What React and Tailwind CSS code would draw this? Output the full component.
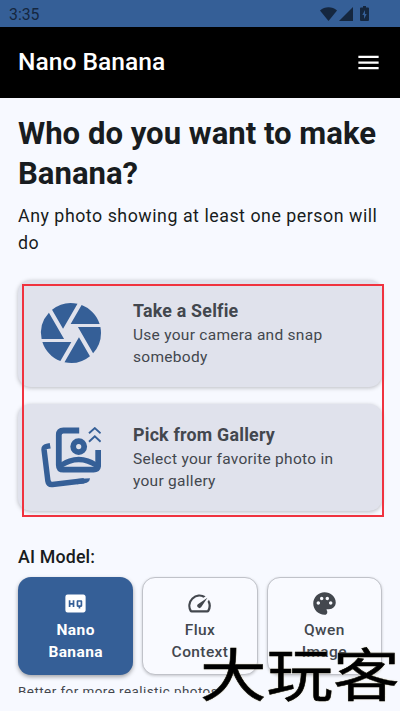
import { MdCamera, MdHighQuality, MdMenu, MdPalette, MdSpeed } from 'react-icons/md';

const GalleryIcon = () => (
    <svg className="mt-[1px]" width="60" height="61" viewBox="0 0 60 61" fill="none" stroke="currentColor">
        <path d="M38.2 3.500H22.400q-4.600 0-4.600 4.600v29.800q0 4.700 4.600 4.700h30.200q4.600 0 4.600-4.700V23" strokeWidth="5.800" />
        <circle cx="37.700" cy="19.600" r="5.500" strokeWidth="5.800" />
        <path d="M19.500 38.600Q37.700 26.400 56 38.600" strokeWidth="5.200" />
        <path d="M9.200 18.800l-3.400.6q-3 .6-2.700 3.600l3.800 31q.6 3.800 4.600 3.400L43 53.800" strokeWidth="5.500" />
        <path d="M36 52l13-.8q-.6 4.400-5.400 5.100L36 57.200z" fill="currentColor" stroke="none" />
        <path d="M48 6.300l5.800-5.200 5.800 5.200M48 14.800l5.800-5.400 5.800 5.400" strokeWidth="1.900" />
    </svg>
);

const options = [
    {
        title: 'Take a Selfie',
        desc: 'Use your camera and snap somebody',
        icon: <MdCamera className="size-[72px] shrink-0" />,
    },
    {
        title: 'Pick from Gallery',
        desc: 'Select your favorite photo in your gallery',
        icon: <GalleryIcon />,
    },
];

const models = [
    { first: 'Nano', second: 'Banana', icon: MdHighQuality, active: true },
    { first: 'Flux', second: 'Context', icon: MdSpeed },
    { first: 'Qwen', second: 'Image', icon: MdPalette },
];

const StatusBar = () => (
    <div className="flex h-[27px] items-center justify-between bg-[#355f97] pl-[9px] pr-[31px] text-[#15273f]">
        <span className="pt-[2px] text-[15.8px] leading-none">3:35</span>
        <div className="flex items-end pb-[1px]">
            <svg width="17" height="14" viewBox="0 0 17 14" fill="currentColor">
                <path d="M8.5 14L0 3.6Q3.7.3 8.5.3T17 3.6z" />
            </svg>
            <svg className="ml-[2px]" width="14" height="14" viewBox="0 0 14 14" fill="currentColor">
                <path d="M14 0v14H0z" />
            </svg>
            <svg className="ml-[7px]" width="9" height="15" viewBox="0 0 9 15">
                <path d="M3 0h3v1.5h2q1 0 1 1V14q0 1-1 1H1q-1 0-1-1V2.5q0-1 1-1h2z" fill="currentColor" />
                <path d="M5 4L2.3 9H4v4l2.700-5H5z" fill="#355f97" />
            </svg>
        </div>
    </div>
);

const App = () => {
    return (
        <div className="relative h-[711px] w-[400px] overflow-hidden bg-[#f7f9ff] font-['Roboto',sans-serif] text-[#181c20]">
            <StatusBar />

            {/* App bar */}
            <header className="flex h-[71px] items-center justify-between bg-black pl-[18px] pr-[18px] text-white">
                <h1 className="text-[24.6px] font-medium leading-none">Nano Banana</h1>
                <MdMenu className="size-[27px]" />
            </header>

            <main className="h-[595px] overflow-hidden px-[18px] pt-4">
                <h2 className="text-[31.1px] font-bold leading-10 whitespace-nowrap">
                    Who do you want to make<br />Banana?
                </h2>
                <p className="mt-[9px] text-[17.8px] leading-[26.7px] tracking-[0.53px] whitespace-nowrap">
                    Any photo showing at least one person will<br />do
                </p>

                <div className="mt-[24px] flex flex-col gap-[17px]">
                    {options.map((option) => (
                        <div key={option.title} className="flex h-[107px] items-center rounded-[13px] bg-[#e0e2ec] pb-[2px] shadow-[0_1px_4px_rgba(0,0,0,0.25)]">
                            <div className="flex w-[106px] shrink-0 justify-center text-[#355f97]">{option.icon}</div>
                            <div className="ml-[9px] w-[215px] text-[#43474e]">
                                <h3 className="text-[17.8px] font-bold leading-[26.7px] tracking-[0.23px]">{option.title}</h3>
                                <p className="text-[15.5px] leading-[22px] tracking-[0.28px]">{option.desc}</p>
                            </div>
                        </div>
                    ))}
                </div>

                <h3 className="mt-[33px] text-[17.8px] font-medium leading-[26.7px] tracking-[0.17px]">AI Model:</h3>
                <div className="mt-[6px] grid grid-cols-3 gap-[9px]">
                    {models.map(({ first, second, icon: Icon, active }) => (
                        <div
                            key={first}
                            className={`flex h-[98px] flex-col items-center rounded-[13px] text-[15.5px] leading-[22.2px] tracking-[0.4px] ${active ? 'bg-[#355f97] pt-[13px] font-bold text-white shadow-[0_2px_4px_rgba(0,0,0,0.35)]' : 'border border-[#c0c2c9] bg-[#f9faff] pt-[12px] font-medium text-[#43474e] shadow-[0_1px_3px_rgba(0,0,0,0.2)]'}`}
                        >
                            <Icon className="size-[27px]" />
                            <span className="mt-[2px]">{first}</span>
                            <span>{second}</span>
                        </div>
                    ))}
                </div>
                <p className="mt-[7px] text-[13.4px] leading-[20px] tracking-[0.47px] text-[#43474e]">Better for more realistic photos</p>
            </main>

            {/* Highlight frame around the two options */}
            <div className="pointer-events-none absolute left-[22px] top-[284px] h-[233px] w-[362px] border-2 border-[#f0333f]" />

            {/* Watermark */}
            <div className="pointer-events-none absolute left-[200px] top-[640px] origin-top-left scale-y-[0.86] font-['Noto_Sans_CJK_SC',sans-serif] text-[66.5px] font-normal leading-[72px] whitespace-nowrap text-black [-webkit-text-stroke:0.6px_black] [text-shadow:0_0_2px_#d8cfa0]">
                大玩客
            </div>
        </div>
    );
};

export default App;
